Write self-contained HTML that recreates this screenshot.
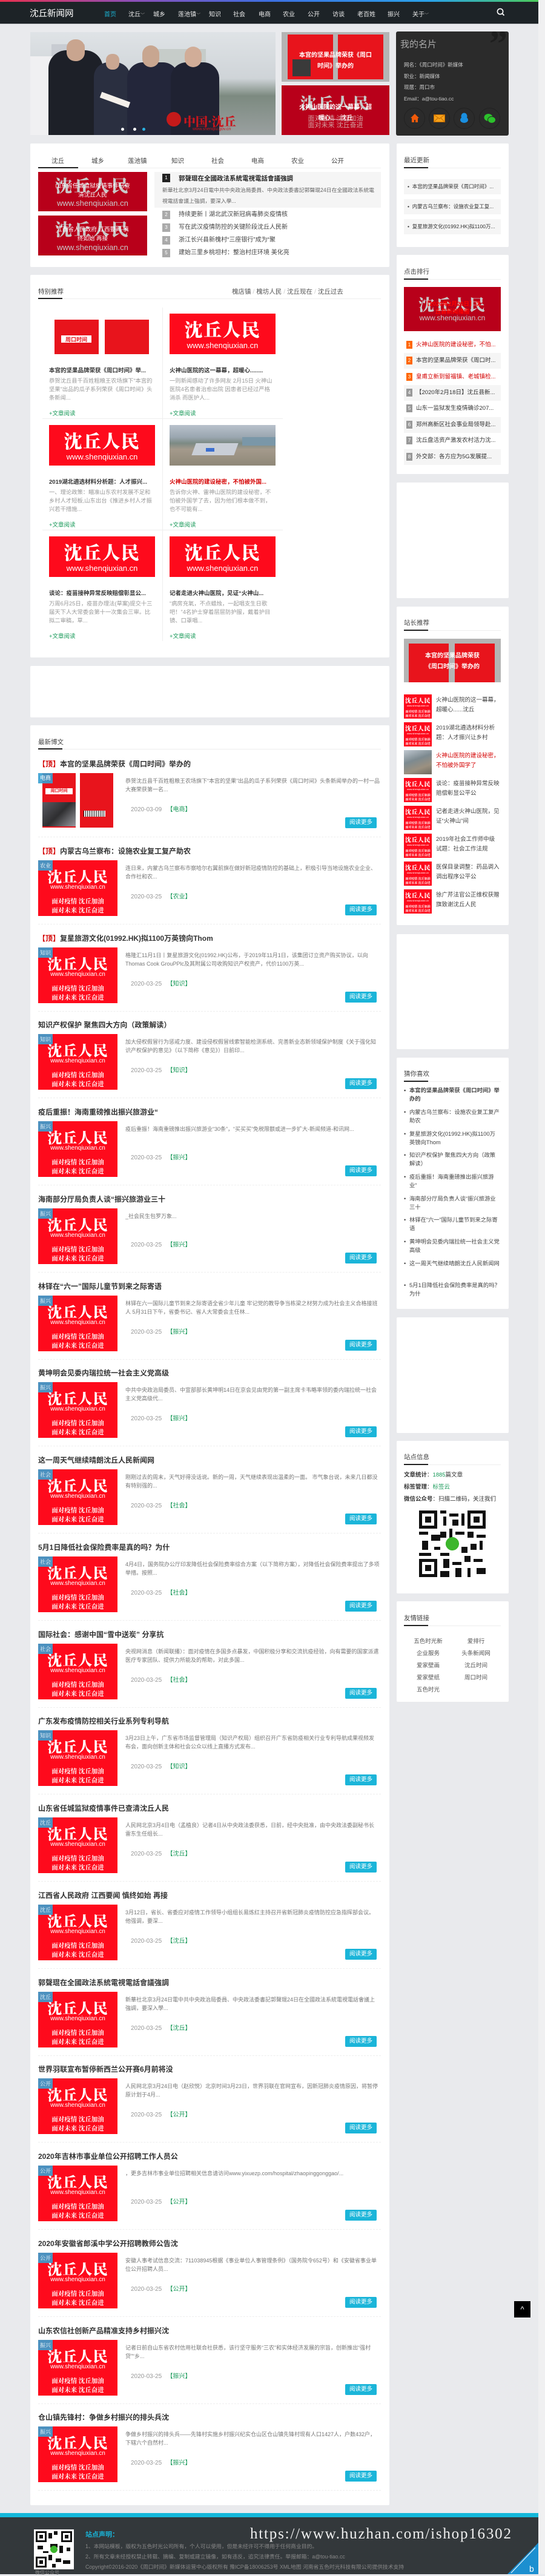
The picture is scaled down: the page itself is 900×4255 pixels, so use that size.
<!DOCTYPE html>
<html><head><meta charset="utf-8">
<style>
*{box-sizing:border-box;margin:0;padding:0}
body{width:900px;height:4252px;position:relative;overflow:hidden;background:#e9eaed;font-family:"Liberation Sans","Noto Sans CJK SC",sans-serif;color:#333}
.abs{position:absolute}
.box{position:absolute;background:#fff;border-radius:2px}
.bt{position:absolute;font-size:10.5px;color:#444;white-space:nowrap}
.ul{position:absolute;height:2px;background:#222}
.gl{position:absolute;height:1px;background:#eee}
.poster{position:absolute;background:#fe0a1c;overflow:hidden;color:#fff;font-family:"Noto Serif CJK SC","Noto Sans CJK SC",serif}
.poster .a{position:absolute;left:0;right:0;text-align:center;font-weight:900;line-height:1;letter-spacing:.05em}
.poster .b{position:absolute;left:0;right:0;text-align:center;font-family:"Liberation Sans",sans-serif;line-height:1}
.poster .c{position:absolute;left:0;right:0;text-align:center;line-height:1.45;font-weight:700;white-space:nowrap}
.tag{position:absolute;left:0;top:0;background:rgba(56,160,210,.9);color:#fff;font-size:9px;padding:2px 3px;line-height:13px}
.art{position:absolute;left:63px;width:566px;height:144px}
.art .t{position:absolute;left:0;top:0;height:24px;line-height:24px;font-size:12px;font-weight:700;color:#333;white-space:nowrap}
.art .t i{font-style:normal;color:#d40000}
.art .d{position:absolute;left:144px;top:33px;width:420px;height:28px;overflow:hidden;font-size:9px;line-height:14px;color:#777}
.art .dt{position:absolute;left:153px;top:78px;font-size:10px;color:#999}
.art .dt b{font-weight:400;color:#1a9a5a}
.art .btn{position:absolute;right:7px;top:100px;width:52px;height:18px;background:#1bb5d9;color:#fff;font-size:9.5px;line-height:18px;text-align:center;border-radius:2px}
.art .dv{position:absolute;left:0;right:0;top:132px;border-top:1px dashed #eee}
.sl{position:absolute;left:667px;width:160px;font-size:8.5px;color:#333;white-space:nowrap;overflow:hidden}
.rk{position:absolute;left:667px;width:160px;height:26px;line-height:26px;font-size:9.5px;white-space:nowrap;overflow:hidden;color:#333}
.rk .n{display:inline-block;width:10px;height:13px;line-height:13px;background:#999;color:#fff;font-size:8px;text-align:center;margin:0 6px 0 4px;vertical-align:middle}
.th{position:absolute;left:667px;width:160px;height:40px}
.th .tx{position:absolute;left:53px;top:2px;width:106px;font-size:9.5px;line-height:16px;color:#444;height:36px;overflow:hidden}
.gc{position:absolute;width:175px}
.gc .gt{position:absolute;top:86px;left:0;font-size:9.5px;font-weight:700;color:#333;white-space:nowrap}
.gc .gd{position:absolute;top:104px;left:0;width:175px;font-size:9.3px;line-height:14px;color:#999;height:42px;overflow:hidden}
.gc .gr{position:absolute;top:157px;left:0;font-size:9.5px;color:#1a9a5a}
.gy{position:absolute;left:667px;width:160px;font-size:9.3px;line-height:14px;color:#444}
.gy:before{content:"•";position:absolute;left:0;top:0}
.gy span{display:block;margin-left:9px}
</style></head><body>

<!-- top gradient -->
<div class="abs" style="left:0;top:0;width:889px;height:3px;background:linear-gradient(90deg,#e8304f,#8a4fb8 25%,#3d6fe0 50%,#2aa2e8 80%,#4ccb5a)"></div>
<div class="abs" style="left:889px;top:0;width:11px;height:4252px;background:#f0f0f1"></div>
<!-- header -->
<div class="abs" style="left:0;top:3px;width:889px;height:36px;background:#1d2327"></div>
<div class="abs" style="left:0;top:39px;width:889px;height:1px;background:#b9bcc0"></div>
<div class="abs" style="left:49px;top:11px;font-size:14.5px;color:#fff;white-space:nowrap">沈丘新闻网</div>
<div class="abs" style="top:15px;left:0;font-size:10px;color:#e8e8e8;white-space:nowrap">
<span class="abs" style="left:172px;color:#1ab0d0">首页</span>
<span class="abs" style="left:212px">沈丘<small style="font-size:7px;color:#999">﹀</small></span>
<span class="abs" style="left:253px">城乡</span>
<span class="abs" style="left:294px">莲池镇<small style="font-size:7px;color:#999">﹀</small></span>
<span class="abs" style="left:345px">知识</span>
<span class="abs" style="left:385px">社会</span>
<span class="abs" style="left:427px">电商</span>
<span class="abs" style="left:467px">农业</span>
<span class="abs" style="left:508px">公开</span>
<span class="abs" style="left:549px">访谈</span>
<span class="abs" style="left:590px">老百姓</span>
<span class="abs" style="left:640px">振兴</span>
<span class="abs" style="left:681px">关于<small style="font-size:7px;color:#999">﹀</small></span>
</div>
<svg class="abs" style="left:820px;top:13px" width="14" height="14" viewBox="0 0 14 14"><circle cx="6" cy="6" r="4.6" fill="none" stroke="#fff" stroke-width="1.6"/><path d="M9.3 9.3L12.5 12.5" stroke="#fff" stroke-width="1.8"/></svg>

<!-- slider -->
<div class="abs" style="left:50px;top:53px;width:405px;height:170px;overflow:hidden;background:linear-gradient(180deg,#dfe3e6 0%,#cfd4d8 45%,#7c8a80 62%,#9aa0a0 100%)">
 <div class="abs" style="left:35px;top:20px;width:55px;height:40px;background:#c8ccd2"></div>
 <div class="abs" style="left:210px;top:28px;width:80px;height:30px;background:#c6ccc9"></div>
 <div class="abs" style="left:0;top:40px;width:40px;height:130px;background:#f0f0f2"></div>
 <div class="abs" style="left:30px;top:30px;width:90px;height:150px;background:#1d2028;border-radius:30px 30px 0 0"></div>
 <div class="abs" style="left:60px;top:12px;width:30px;height:36px;background:#c9a58f;border-radius:14px"></div>
 <div class="abs" style="left:105px;top:50px;width:60px;height:130px;background:#2a2f40;border-radius:24px 24px 0 0"></div>
 <div class="abs" style="left:125px;top:36px;width:22px;height:26px;background:#caa792;border-radius:10px"></div>
 <div class="abs" style="left:160px;top:50px;width:85px;height:130px;background:#23263a;border-radius:26px 26px 0 0"></div>
 <div class="abs" style="left:185px;top:22px;width:28px;height:36px;background:#c8a690;border-radius:14px"></div>
 <div class="abs" style="left:232px;top:50px;width:80px;height:130px;background:#1f2232;border-radius:26px 26px 0 0"></div>
 <div class="abs" style="left:255px;top:24px;width:28px;height:34px;background:#d1ad98;border-radius:14px"></div>
 <div class="abs" style="left:115px;top:107px;width:50px;height:10px;background:#f4f0ea;transform:rotate(20deg)"></div>
 <div class="abs" style="left:225px;top:132px;width:24px;height:24px;border-radius:50%;background:#c51a1a"></div>
 <div class="abs" style="left:253px;top:132px;font-size:20px;font-weight:900;color:#c8161d;font-family:'Noto Serif CJK SC',serif;white-space:nowrap">中国·沈丘</div>
 <div class="abs" style="left:268px;top:157px;font-size:7px;color:#c8161d;white-space:nowrap">www.shenqiu.gov.cn</div>
 <div class="abs" style="left:170px;top:158px;width:5px;height:5px;border-radius:50%;background:#fff"></div>
 <div class="abs" style="left:185px;top:158px;width:5px;height:5px;border-radius:50%;background:#29b0e0"></div>
 <div class="abs" style="left:150px;top:158px;width:5px;height:5px;border-radius:50%;background:#fff"></div>
</div>
<!-- small img1 -->
<div class="abs" style="left:465px;top:53px;width:178px;height:82px;background:#b4b4b4;overflow:hidden">
 <div class="abs" style="left:10px;top:4px;width:75px;height:74px;background:#e8141c"></div>
 <div class="abs" style="left:93px;top:4px;width:75px;height:74px;background:#e8141c"></div>
 <div class="abs" style="left:18px;top:45px;width:30px;height:28px;background:#3a3a3a"></div>
 <div class="abs" style="left:0;right:0;top:30px;text-align:center;font-size:10px;line-height:18px;color:#fff;font-weight:700">本宫的坚果品牌荣获《周口<br>时间》举办的</div>
</div>
<!-- small img2 -->
<div class="abs" style="left:465px;top:141px;width:178px;height:82px;background:#b8001a;overflow:hidden">
 <div class="abs" style="left:0;right:0;top:10px;text-align:center;font-size:26px;color:#c9c9c9;font-weight:900;font-family:'Noto Serif CJK SC',serif;letter-spacing:3px">沈丘人民</div>
 <div class="abs" style="left:0;right:0;top:50px;text-align:center;font-size:11px;color:#d3a0a0;line-height:11px">面对疫情 沈丘加油<br>面对未来 沈丘奋进</div>
 <div class="abs" style="left:0;right:0;top:28px;text-align:center;font-size:10px;line-height:18px;color:#fff;font-weight:700">火神山医院的这一幕幕，超<br>暖心......沈丘</div>
</div>
<!-- card -->
<div class="abs" style="left:654px;top:52px;width:186px;height:172px;background:#2b2b2b;border-radius:3px;overflow:hidden">
 <div class="abs" style="right:2px;top:-14px;font-size:60px;color:#1e1e1e;font-family:'Liberation Serif',serif;font-weight:700">”</div>
 <div class="abs" style="left:7px;top:10px;font-size:15px;color:#a9a9a9">我的名片</div>
 <div class="abs" style="left:13px;top:46px;font-size:8.5px;color:#ccc;line-height:18.5px;white-space:nowrap">网名：《周口时间》新媒体<br>职业：新闻媒体<br>现居：周口市<br>Email：a@tou-tiao.cc</div>
 <div class="abs" style="left:13px;top:126px;width:35px;height:35px;border-radius:50%;border:1px solid #222"></div>
 <div class="abs" style="left:54px;top:126px;width:35px;height:35px;border-radius:50%;border:1px solid #222"></div>
 <div class="abs" style="left:95px;top:126px;width:35px;height:35px;border-radius:50%;border:1px solid #222"></div>
 <div class="abs" style="left:137px;top:126px;width:35px;height:35px;border-radius:50%;border:1px solid #222"></div>
 <svg class="abs" style="left:23px;top:135px" width="16" height="16" viewBox="0 0 16 16"><path d="M8 1L1 8h2v7h4v-4h2v4h4V8h2z" fill="#f05a0a"/></svg>
 <svg class="abs" style="left:62px;top:137px" width="19" height="13" viewBox="0 0 19 13"><rect x=".5" y=".5" width="18" height="12" fill="#f7a21a" stroke="#c46b00"/><path d="M.5 .5L9.5 7 18.5 .5M.5 12.5L7 6M18.5 12.5L12 6" stroke="#c46b00" fill="none"/></svg>
 <svg class="abs" style="left:105px;top:134px" width="15" height="18" viewBox="0 0 15 18"><ellipse cx="7.5" cy="6" rx="5" ry="5.5" fill="#1a8fe0"/><ellipse cx="7.5" cy="12" rx="6.5" ry="5" fill="#1a8fe0"/></svg>
 <svg class="abs" style="left:145px;top:135px" width="20" height="17" viewBox="0 0 20 17"><ellipse cx="7.5" cy="7" rx="7" ry="6" fill="#2cc12c"/><ellipse cx="13" cy="11" rx="6.5" ry="5.5" fill="#2cc12c" stroke="#2b2b2b" stroke-width="1"/></svg>
</div>

<!-- BOX 1 tabs -->
<div class="box" style="left:50px;top:237px;width:593px;height:204px"></div>
<div class="abs" style="top:258px;left:0;font-size:10.5px;color:#444;white-space:nowrap">
<span class="abs" style="left:85px">沈丘</span><span class="abs" style="left:151px">城乡</span><span class="abs" style="left:211px">莲池镇</span><span class="abs" style="left:283px">知识</span><span class="abs" style="left:349px">社会</span><span class="abs" style="left:415px">电商</span><span class="abs" style="left:481px">农业</span><span class="abs" style="left:547px">公开</span></div>
<div class="gl" style="left:63px;top:277px;width:566px"></div>
<div class="ul" style="left:63px;top:276px;width:66px"></div>
<div class="abs" style="left:63px;top:284px;width:180px;height:65px;background:#b8001a;overflow:hidden">
 <div class="abs" style="left:0;right:0;top:2px;text-align:center;font-size:28px;color:#c9c9c9;font-weight:900;font-family:'Noto Serif CJK SC',serif;letter-spacing:3px">沈丘人民</div>
 <div class="abs" style="left:0;right:0;top:44px;text-align:center;font-size:13px;color:#c9c9c9">www.shenqiuxian.cn</div>
 <div class="abs" style="left:0;right:0;top:16px;text-align:center;font-size:9.5px;line-height:15px;color:#fff">山东省任城监狱疫情事件已查<br>清沈丘人民</div>
</div>
<div class="abs" style="left:63px;top:356px;width:180px;height:66px;background:#b8001a;overflow:hidden">
 <div class="abs" style="left:0;right:0;top:2px;text-align:center;font-size:28px;color:#c9c9c9;font-weight:900;font-family:'Noto Serif CJK SC',serif;letter-spacing:3px">沈丘人民</div>
 <div class="abs" style="left:0;right:0;top:45px;text-align:center;font-size:13px;color:#c9c9c9">www.shenqiuxian.cn</div>
 <div class="abs" style="left:0;right:0;top:16px;text-align:center;font-size:9.5px;line-height:15px;color:#fff">江西省人民政府 江西要闻 慎<br>终如始 再接</div>
</div>
<div class="abs" style="left:255px;top:284px;width:374px;height:59px;background:#f5f5f5"></div>
<div class="abs" style="left:268px;top:287px;width:13px;height:14px;background:#222;color:#fff;font-size:8px;text-align:center;line-height:14px">1</div>
<div class="abs" style="left:295px;top:287px;font-size:10.5px;font-weight:700;color:#222;white-space:nowrap">郭聲琨在全國政法系統電視電話會議強調</div>
<div class="abs" style="left:268px;top:305px;width:355px;font-size:8.8px;line-height:18px;color:#666">新華社北京3月24日電中共中央政治局委員、中央政法委書記郭聲琨24日在全國政法系統電視電話會議上強調，要深入學...</div>
<div class="abs" style="left:268px;top:348px;font-size:10px;color:#444;line-height:14px">
<div style="position:absolute;top:0;width:13px;height:14px;background:#aaa;color:#fff;font-size:8px;text-align:center">2</div><div style="position:absolute;left:27px;top:0;white-space:nowrap">持续更新丨湖北武汉新冠病毒肺炎疫情核</div>
<div style="position:absolute;top:21px;width:13px;height:14px;background:#aaa;color:#fff;font-size:8px;text-align:center">3</div><div style="position:absolute;left:27px;top:21px;white-space:nowrap">写在武汉疫情防控的关键阶段沈丘人民新</div>
<div style="position:absolute;top:42px;width:13px;height:14px;background:#aaa;color:#fff;font-size:8px;text-align:center">4</div><div style="position:absolute;left:27px;top:42px;white-space:nowrap">浙江长兴县新槐村“三座银行”成为“聚</div>
<div style="position:absolute;top:63px;width:13px;height:14px;background:#aaa;color:#fff;font-size:8px;text-align:center">5</div><div style="position:absolute;left:27px;top:63px;white-space:nowrap">建始三里乡桃坦村：整治村庄环境 美化亮</div>
</div>

<!-- BOX 2 特别推荐 -->
<div class="box" style="left:50px;top:454px;width:593px;height:632px"></div>
<div class="bt" style="left:63px;top:474px">特别推荐</div>
<div class="abs" style="left:383px;top:474px;font-size:10.5px;color:#555;white-space:nowrap">槐店镇 <span style="color:#ccc">/</span> 槐坊人民 <span style="color:#ccc">/</span> 沈丘现在 <span style="color:#ccc">/</span> 沈丘过去</div>
<div class="gl" style="left:63px;top:493px;width:566px"></div>
<div class="ul" style="left:63px;top:492px;width:40px"></div>
<div class="abs" style="left:268px;top:508px;width:1px;height:551px;background:#eee"></div>
<div class="abs" style="left:70px;top:691px;width:397px;height:1px;background:#eee"></div>
<div class="abs" style="left:70px;top:875px;width:397px;height:1px;background:#eee"></div>

<div class="gc" style="left:81px;top:518px">
 <div class="abs" style="left:0;top:0;width:175px;height:67px;background:#fff">
  <div class="abs" style="left:9px;top:10px;width:73px;height:57px;background:#e8141c"></div>
  <div class="abs" style="left:92px;top:10px;width:73px;height:57px;background:#e8141c"></div>
  <div class="abs" style="left:20px;top:36px;width:50px;height:12px;background:#fff;color:#e8141c;font-size:9px;font-weight:700;text-align:center">周口时间</div>
 </div>
 <div class="gt">本宫的坚果品牌荣获《周口时间》举...</div>
 <div class="gd">恭贺沈丘县千百姓粗粮王农场旗下“本宫的坚果”出品的瓜子系列荣获《周口时间》头条新闻...</div>
 <div class="gr">+文章阅读</div>
</div>
<div class="gc" style="left:280px;top:518px">
 <div class="poster" style="left:0;top:0;width:175px;height:67px"><div class="a" style="top:10px;font-size:30px">沈丘人民</div><div class="b" style="top:46px;font-size:13px">www.shenqiuxian.cn</div></div>
 <div class="gt">火神山医院的这一幕幕，超暖心........</div>
 <div class="gd">一则新闻感动了许多网友 2月15日 火神山医院4名患者治愈出院 因患者已经过严格消杀 而医护人...</div>
 <div class="gr">+文章阅读</div>
</div>
<div class="gc" style="left:81px;top:702px">
 <div class="poster" style="left:0;top:0;width:175px;height:67px"><div class="a" style="top:10px;font-size:30px">沈丘人民</div><div class="b" style="top:46px;font-size:13px">www.shenqiuxian.cn</div></div>
 <div class="gt">2019湖北遴选材料分析题：人才振兴...</div>
 <div class="gd">一、理论政策：瞄准山东农村发展不足和乡村人才短板,山东出台《推进乡村人才振兴若干措施...</div>
 <div class="gr">+文章阅读</div>
</div>
<div class="gc" style="left:280px;top:702px">
 <div class="abs" style="left:0;top:0;width:175px;height:67px;background:linear-gradient(180deg,#b9c2cc 0%,#9aa6b0 30%,#7c8a84 45%,#a49a8c 60%,#8f8878 100%);overflow:hidden">
  <div class="abs" style="left:40px;top:30px;width:70px;height:20px;background:#c9ced6;transform:skewX(-20deg)"></div>
  <div class="abs" style="left:120px;top:20px;width:60px;height:14px;background:#7a97a8"></div>
  <div class="abs" style="left:60px;top:38px;width:14px;height:6px;background:#3b6fd0"></div>
 </div>
 <div class="gt" style="color:#d40000">火神山医院的建设秘密，不怕被外国...</div>
 <div class="gd">告诉你火神、雷神山医院的建设秘密，不怕被外国学了去，因为他们根本做不到，也不可能有...</div>
 <div class="gr">+文章阅读</div>
</div>
<div class="gc" style="left:81px;top:886px">
 <div class="poster" style="left:0;top:0;width:175px;height:67px"><div class="a" style="top:10px;font-size:30px">沈丘人民</div><div class="b" style="top:46px;font-size:13px">www.shenqiuxian.cn</div></div>
 <div class="gt">谈论：疫苗接种异常反映赔偿彰显公...</div>
 <div class="gd">万周6月25日，疫苗办理法(草案)提交十三届天下人大常委会第十一次集会三审。比拟二审稿，草...</div>
 <div class="gr">+文章阅读</div>
</div>
<div class="gc" style="left:280px;top:886px">
 <div class="poster" style="left:0;top:0;width:175px;height:67px"><div class="a" style="top:10px;font-size:30px">沈丘人民</div><div class="b" style="top:46px;font-size:13px">www.shenqiuxian.cn</div></div>
 <div class="gt">记者走进火神山医院，见证“火神山...</div>
 <div class="gd">“病房充氧，不点蜡烛，一起唱支生日歌吧！”4名护士穿着层层防护服，戴着护目镜、口罩唱...</div>
 <div class="gr">+文章阅读</div>
</div>

<!-- empty main box -->
<div class="box" style="left:50px;top:1100px;width:593px;height:85px"></div>

<!-- 最新博文 -->
<div class="box" style="left:50px;top:1198px;width:593px;height:2940px"></div>
<div class="bt" style="left:63px;top:1218px">最新博文</div>
<div class="gl" style="left:63px;top:1237px;width:566px"></div>
<div class="ul" style="left:63px;top:1236px;width:40px"></div>

<div class="art" style="top:1250px"><div class="t"><i>【顶】</i>本宫的坚果品牌荣获《周口时间》举办的</div>
 <div class="abs" style="left:0;top:27px;width:131px;height:92px">
  <div class="abs" style="left:7px;top:0;width:55px;height:90px;background:#e8141c"></div>
  <div class="abs" style="left:69px;top:0;width:55px;height:90px;background:#e8141c"></div>
  <div class="abs" style="left:12px;top:25px;width:45px;height:10px;background:#fff;color:#e8141c;font-size:7px;font-weight:700;text-align:center;line-height:10px">周口时间</div>
  <div class="abs" style="left:7px;top:48px;width:55px;height:40px;background:linear-gradient(135deg,#5a5a62,#2e2e30,#9a9aa0)"></div>
  <div class="abs" style="left:75px;top:62px;width:36px;height:10px;background:repeating-linear-gradient(90deg,#111 0 1px,#fff 1px 3px)"></div>
  <div class="tag">电商</div></div>
 <div class="d">恭贺沈丘县千百姓粗粮王农场旗下“本宫的坚果”出品的瓜子系列荣获《周口时间》头条新闻举办的一村一品大赛荣获第一名...</div>
 <div class="dt">2020-03-09 &nbsp; <b>【电商】</b></div><div class="btn">阅读更多</div><div class="dv"></div></div>

<div class="art" style="top:1394px"><div class="t"><i>【顶】</i>内蒙古乌兰察布：设施农业复工复产助农</div>
 <div class="poster" style="left:0;top:27px;width:131px;height:92px"><div class="a" style="top:14px;font-size:24px">沈丘人民</div><div class="b" style="top:40px;font-size:10px">www.shenqiuxian.cn</div><div class="c" style="top:60px;font-size:10.5px">面对疫情 沈丘加油<br>面对未来 沈丘奋进</div><div class="tag">农业</div></div>
 <div class="d">连日来，内蒙古乌兰察布市察哈尔右翼前旗在做好新冠疫情防控的基础上，积极引导当地设施农业企业、合作社和农...</div>
 <div class="dt">2020-03-25 &nbsp; <b>【农业】</b></div><div class="btn">阅读更多</div><div class="dv"></div></div>

<div class="art" style="top:1538px"><div class="t"><i>【顶】</i>复星旅游文化(01992.HK)拟1100万英镑向Thom</div>
 <div class="poster" style="left:0;top:27px;width:131px;height:92px"><div class="a" style="top:14px;font-size:24px">沈丘人民</div><div class="b" style="top:40px;font-size:10px">www.shenqiuxian.cn</div><div class="c" style="top:60px;font-size:10.5px">面对疫情 沈丘加油<br>面对未来 沈丘奋进</div><div class="tag">知识</div></div>
 <div class="d">格隆汇11月1日丨复星旅游文化(01992.HK)公布，于2019年11月1日，该集团订立资产购买协议，以向Thomas Cook GrouPPlc及其附属公司收购知识产权资产，代价1100万英...</div>
 <div class="dt">2020-03-25 &nbsp; <b>【知识】</b></div><div class="btn">阅读更多</div><div class="dv"></div></div>

<div class="art" style="top:1681px"><div class="t">知识产权保护 聚焦四大方向（政策解读）</div>
 <div class="poster" style="left:0;top:27px;width:131px;height:92px"><div class="a" style="top:14px;font-size:24px">沈丘人民</div><div class="b" style="top:40px;font-size:10px">www.shenqiuxian.cn</div><div class="c" style="top:60px;font-size:10.5px">面对疫情 沈丘加油<br>面对未来 沈丘奋进</div><div class="tag">知识</div></div>
 <div class="d">加大侵权假冒行为惩戒力度、建设侵权假冒线索智能检测系统、完善新业态新领域保护制度《关于强化知识产权保护的意见》（以下简称《意见》）日前印...</div>
 <div class="dt">2020-03-25 &nbsp; <b>【知识】</b></div><div class="btn">阅读更多</div><div class="dv"></div></div>

<div class="art" style="top:1825px"><div class="t">疫后重振！海南重磅推出振兴旅游业“</div>
 <div class="poster" style="left:0;top:27px;width:131px;height:92px"><div class="a" style="top:14px;font-size:24px">沈丘人民</div><div class="b" style="top:40px;font-size:10px">www.shenqiuxian.cn</div><div class="c" style="top:60px;font-size:10.5px">面对疫情 沈丘加油<br>面对未来 沈丘奋进</div><div class="tag">振兴</div></div>
 <div class="d">疫后重振！海南重磅推出振兴旅游业“30条”，“买买买”免税限额或进一步扩大-新闻频道-和讯网...</div>
 <div class="dt">2020-03-25 &nbsp; <b>【振兴】</b></div><div class="btn">阅读更多</div><div class="dv"></div></div>

<div class="art" style="top:1969px"><div class="t">海南部分厅局负责人谈“振兴旅游业三十</div>
 <div class="poster" style="left:0;top:27px;width:131px;height:92px"><div class="a" style="top:14px;font-size:24px">沈丘人民</div><div class="b" style="top:40px;font-size:10px">www.shenqiuxian.cn</div><div class="c" style="top:60px;font-size:10.5px">面对疫情 沈丘加油<br>面对未来 沈丘奋进</div><div class="tag">振兴</div></div>
 <div class="d">_社会民生包罗万象...</div>
 <div class="dt">2020-03-25 &nbsp; <b>【振兴】</b></div><div class="btn">阅读更多</div><div class="dv"></div></div>

<div class="art" style="top:2113px"><div class="t">林铎在“六一”国际儿童节到来之际寄语</div>
 <div class="poster" style="left:0;top:27px;width:131px;height:92px"><div class="a" style="top:14px;font-size:24px">沈丘人民</div><div class="b" style="top:40px;font-size:10px">www.shenqiuxian.cn</div><div class="c" style="top:60px;font-size:10.5px">面对疫情 沈丘加油<br>面对未来 沈丘奋进</div><div class="tag">振兴</div></div>
 <div class="d">林铎在六一国际儿童节到来之际寄语全省少年儿童 牢记党的教导争当栋梁之材努力成为社会主义合格接班人 5月31日下午，省委书记、省人大常委会主任林...</div>
 <div class="dt">2020-03-25 &nbsp; <b>【振兴】</b></div><div class="btn">阅读更多</div><div class="dv"></div></div>

<div class="art" style="top:2256px"><div class="t">黄坤明会见委内瑞拉统一社会主义党高级</div>
 <div class="poster" style="left:0;top:27px;width:131px;height:92px"><div class="a" style="top:14px;font-size:24px">沈丘人民</div><div class="b" style="top:40px;font-size:10px">www.shenqiuxian.cn</div><div class="c" style="top:60px;font-size:10.5px">面对疫情 沈丘加油<br>面对未来 沈丘奋进</div><div class="tag">振兴</div></div>
 <div class="d">中共中央政治局委员、中宣部部长黄坤明14日在京会见由党的第一副主席卡韦略率领的委内瑞拉统一社会主义党高级代...</div>
 <div class="dt">2020-03-25 &nbsp; <b>【振兴】</b></div><div class="btn">阅读更多</div><div class="dv"></div></div>

<div class="art" style="top:2400px"><div class="t">这一周天气继续晴朗沈丘人民新闻网</div>
 <div class="poster" style="left:0;top:27px;width:131px;height:92px"><div class="a" style="top:14px;font-size:24px">沈丘人民</div><div class="b" style="top:40px;font-size:10px">www.shenqiuxian.cn</div><div class="c" style="top:60px;font-size:10.5px">面对疫情 沈丘加油<br>面对未来 沈丘奋进</div><div class="tag">社会</div></div>
 <div class="d">刚刚过去的周末，天气好得没话说。新的一周，天气继续表现出温柔的一面。 市气象台说，未来几日都没有特别强的...</div>
 <div class="dt">2020-03-25 &nbsp; <b>【社会】</b></div><div class="btn">阅读更多</div><div class="dv"></div></div>

<div class="art" style="top:2544px"><div class="t">5月1日降低社会保险费率是真的吗？为什</div>
 <div class="poster" style="left:0;top:27px;width:131px;height:92px"><div class="a" style="top:14px;font-size:24px">沈丘人民</div><div class="b" style="top:40px;font-size:10px">www.shenqiuxian.cn</div><div class="c" style="top:60px;font-size:10.5px">面对疫情 沈丘加油<br>面对未来 沈丘奋进</div><div class="tag">社会</div></div>
 <div class="d">4月4日，国务院办公厅印发降低社会保险费率综合方案（以下简称方案），对降低社会保险费率提出了多项举措。按照...</div>
 <div class="dt">2020-03-25 &nbsp; <b>【社会】</b></div><div class="btn">阅读更多</div><div class="dv"></div></div>

<div class="art" style="top:2688px"><div class="t">国际社会：感谢中国“雪中送炭” 分享抗</div>
 <div class="poster" style="left:0;top:27px;width:131px;height:92px"><div class="a" style="top:14px;font-size:24px">沈丘人民</div><div class="b" style="top:40px;font-size:10px">www.shenqiuxian.cn</div><div class="c" style="top:60px;font-size:10.5px">面对疫情 沈丘加油<br>面对未来 沈丘奋进</div><div class="tag">社会</div></div>
 <div class="d">央视网消息（新闻联播）：面对疫情在多国多点暴发，中国积极分享和交流抗疫经验，向有需要的国家派遣医疗专家团队、提供力所能及的帮助，对此多国...</div>
 <div class="dt">2020-03-25 &nbsp; <b>【社会】</b></div><div class="btn">阅读更多</div><div class="dv"></div></div>

<div class="art" style="top:2831px"><div class="t">广东发布疫情防控相关行业系列专利导航</div>
 <div class="poster" style="left:0;top:27px;width:131px;height:92px"><div class="a" style="top:14px;font-size:24px">沈丘人民</div><div class="b" style="top:40px;font-size:10px">www.shenqiuxian.cn</div><div class="c" style="top:60px;font-size:10.5px">面对疫情 沈丘加油<br>面对未来 沈丘奋进</div><div class="tag">知识</div></div>
 <div class="d">3月23日上午，广东省市场监督管理局（知识产权局）组织召开广东省防疫相关行业专利导航成果视频发布会，面向创新主体和社会公众以线上直播方式发布...</div>
 <div class="dt">2020-03-25 &nbsp; <b>【知识】</b></div><div class="btn">阅读更多</div><div class="dv"></div></div>

<div class="art" style="top:2975px"><div class="t">山东省任城监狱疫情事件已查清沈丘人民</div>
 <div class="poster" style="left:0;top:27px;width:131px;height:92px"><div class="a" style="top:14px;font-size:24px">沈丘人民</div><div class="b" style="top:40px;font-size:10px">www.shenqiuxian.cn</div><div class="c" style="top:60px;font-size:10.5px">面对疫情 沈丘加油<br>面对未来 沈丘奋进</div><div class="tag">沈丘</div></div>
 <div class="d">人民网北京3月4日电（孟植良）记者4日从中央政法委获悉，日前，经中央批准，由中央政法委副秘书长雷东生任组长...</div>
 <div class="dt">2020-03-25 &nbsp; <b>【沈丘】</b></div><div class="btn">阅读更多</div><div class="dv"></div></div>

<div class="art" style="top:3119px"><div class="t">江西省人民政府 江西要闻 慎终如始 再接</div>
 <div class="poster" style="left:0;top:27px;width:131px;height:92px"><div class="a" style="top:14px;font-size:24px">沈丘人民</div><div class="b" style="top:40px;font-size:10px">www.shenqiuxian.cn</div><div class="c" style="top:60px;font-size:10.5px">面对疫情 沈丘加油<br>面对未来 沈丘奋进</div><div class="tag">沈丘</div></div>
 <div class="d">3月12日，省长、省委应对疫情工作领导小组组长易炼红主持召开省新冠肺炎疫情防控应急指挥部会议。他强调，要深...</div>
 <div class="dt">2020-03-25 &nbsp; <b>【沈丘】</b></div><div class="btn">阅读更多</div><div class="dv"></div></div>

<div class="art" style="top:3263px"><div class="t">郭聲琨在全國政法系統電視電話會議強調</div>
 <div class="poster" style="left:0;top:27px;width:131px;height:92px"><div class="a" style="top:14px;font-size:24px">沈丘人民</div><div class="b" style="top:40px;font-size:10px">www.shenqiuxian.cn</div><div class="c" style="top:60px;font-size:10.5px">面对疫情 沈丘加油<br>面对未来 沈丘奋进</div><div class="tag">沈丘</div></div>
 <div class="d">新華社北京3月24日電中共中央政治局委員、中央政法委書記郭聲琨24日在全國政法系統電視電話會議上強調，要深入學...</div>
 <div class="dt">2020-03-25 &nbsp; <b>【沈丘】</b></div><div class="btn">阅读更多</div><div class="dv"></div></div>

<div class="art" style="top:3406px"><div class="t">世界羽联宣布暂停新西兰公开赛6月前将没</div>
 <div class="poster" style="left:0;top:27px;width:131px;height:92px"><div class="a" style="top:14px;font-size:24px">沈丘人民</div><div class="b" style="top:40px;font-size:10px">www.shenqiuxian.cn</div><div class="c" style="top:60px;font-size:10.5px">面对疫情 沈丘加油<br>面对未来 沈丘奋进</div><div class="tag">公开</div></div>
 <div class="d">人民网北京3月24日电（赵欣悦）北京时间3月23日，世界羽联在官网宣布，因新冠肺炎疫情原因，将暂停原计划于4月...</div>
 <div class="dt">2020-03-25 &nbsp; <b>【公开】</b></div><div class="btn">阅读更多</div><div class="dv"></div></div>

<div class="art" style="top:3550px"><div class="t">2020年吉林市事业单位公开招聘工作人员公</div>
 <div class="poster" style="left:0;top:27px;width:131px;height:92px"><div class="a" style="top:14px;font-size:24px">沈丘人民</div><div class="b" style="top:40px;font-size:10px">www.shenqiuxian.cn</div><div class="c" style="top:60px;font-size:10.5px">面对疫情 沈丘加油<br>面对未来 沈丘奋进</div><div class="tag">公开</div></div>
 <div class="d">，更多吉林市事业单位招聘相关信息请访问www.yixuezp.com/hospital/zhaopinggonggao/...</div>
 <div class="dt">2020-03-25 &nbsp; <b>【公开】</b></div><div class="btn">阅读更多</div><div class="dv"></div></div>

<div class="art" style="top:3694px"><div class="t">2020年安徽省郎溪中学公开招聘教师公告沈</div>
 <div class="poster" style="left:0;top:27px;width:131px;height:92px"><div class="a" style="top:14px;font-size:24px">沈丘人民</div><div class="b" style="top:40px;font-size:10px">www.shenqiuxian.cn</div><div class="c" style="top:60px;font-size:10.5px">面对疫情 沈丘加油<br>面对未来 沈丘奋进</div><div class="tag">公开</div></div>
 <div class="d">安徽人事考试信息交流：711038945根据《事业单位人事管理条例》（国务院令652号）和《安徽省事业单位公开招聘人员...</div>
 <div class="dt">2020-03-25 &nbsp; <b>【公开】</b></div><div class="btn">阅读更多</div><div class="dv"></div></div>

<div class="art" style="top:3838px"><div class="t">山东农信社创新产品精准支持乡村振兴沈</div>
 <div class="poster" style="left:0;top:27px;width:131px;height:92px"><div class="a" style="top:14px;font-size:24px">沈丘人民</div><div class="b" style="top:40px;font-size:10px">www.shenqiuxian.cn</div><div class="c" style="top:60px;font-size:10.5px">面对疫情 沈丘加油<br>面对未来 沈丘奋进</div><div class="tag">振兴</div></div>
 <div class="d">记者日前自山东省农村信用社联合社获悉，该行坚守服务“三农”和实体经济发展的宗旨，创新推出“强村贷”“乡...</div>
 <div class="dt">2020-03-25 &nbsp; <b>【振兴】</b></div><div class="btn">阅读更多</div><div class="dv"></div></div>

<div class="art" style="top:3981px"><div class="t">仓山镇先锋村：争做乡村振兴的排头兵沈</div>
 <div class="poster" style="left:0;top:27px;width:131px;height:92px"><div class="a" style="top:14px;font-size:24px">沈丘人民</div><div class="b" style="top:40px;font-size:10px">www.shenqiuxian.cn</div><div class="c" style="top:60px;font-size:10.5px">面对疫情 沈丘加油<br>面对未来 沈丘奋进</div><div class="tag">振兴</div></div>
 <div class="d">争做乡村振兴的排头兵——先锋村实施乡村振兴纪实仓山区仓山镇先锋村现有人口1427人，户数432户，下辖六个自然村...</div>
 <div class="dt">2020-03-25 &nbsp; <b>【振兴】</b></div><div class="btn">阅读更多</div><div class="dv"></div></div>

<!-- SIDEBAR -->
<div class="box" style="left:655px;top:237px;width:185px;height:171px"></div>
<div class="bt" style="left:667px;top:257px">最近更新</div>
<div class="gl" style="left:667px;top:277px;width:160px"></div>
<div class="ul" style="left:667px;top:276px;width:40px"></div>
<div class="sl" style="top:296px;height:25px;line-height:25px;background:#f5f5f5;padding-left:6px">• &nbsp;本宫的坚果品牌荣获《周口时间》...</div>
<div class="sl" style="top:329px;height:25px;line-height:25px;background:#f5f5f5;padding-left:6px">• &nbsp;内蒙古乌兰察布：设施农业复工复...</div>
<div class="sl" style="top:362px;height:25px;line-height:25px;background:#f5f5f5;padding-left:6px">• &nbsp;复星旅游文化(01992.HK)拟1100万...</div>

<div class="box" style="left:655px;top:421px;width:185px;height:362px"></div>
<div class="bt" style="left:667px;top:441px">点击排行</div>
<div class="gl" style="left:667px;top:461px;width:160px"></div>
<div class="ul" style="left:667px;top:460px;width:40px"></div>
<div class="abs" style="left:667px;top:474px;width:160px;height:73px;background:#b8001a;overflow:hidden">
 <div class="abs" style="left:0;right:0;top:10px;text-align:center;font-size:26px;color:#c9c9c9;font-weight:900;font-family:'Noto Serif CJK SC',serif;letter-spacing:2px">沈丘人民</div>
 <div class="abs" style="left:0;right:0;top:44px;text-align:center;font-size:12px;color:#c9c9c9">www.shenqiuxian.cn</div>
 <div class="abs" style="left:0;right:0;top:22px;text-align:center;font-size:9.5px;line-height:13px;color:#f00;font-weight:700">【2020年2月20日】沈<br>丘县新闻播报</div>
</div>
<div class="rk" style="top:557px;color:#d40000"><span class="n" style="background:#f60">1</span>火神山医院的建设秘密，不怕...</div>
<div class="rk" style="top:583px;background:#f5f5f5"><span class="n" style="background:#f60">2</span>本宫的坚果品牌荣获《周口时...</div>
<div class="rk" style="top:610px;color:#d40000"><span class="n" style="background:#f60">3</span>皇甫立新到留福镇、老城镇检...</div>
<div class="rk" style="top:636px;background:#f5f5f5"><span class="n">4</span>【2020年2月18日】沈丘县新...</div>
<div class="rk" style="top:662px"><span class="n">5</span>山东一监狱发生疫情确诊207...</div>
<div class="rk" style="top:689px;background:#f5f5f5"><span class="n">6</span>郑州高新区社会事业局领导赴...</div>
<div class="rk" style="top:715px"><span class="n">7</span>沈丘盘活资产激发农村活力沈...</div>
<div class="rk" style="top:742px;background:#f5f5f5"><span class="n">8</span>外交部：各方应为5G发展提...</div>

<div class="box" style="left:655px;top:797px;width:185px;height:191px"></div>

<div class="box" style="left:655px;top:1002px;width:185px;height:526px"></div>
<div class="bt" style="left:667px;top:1021px">站长推荐</div>
<div class="gl" style="left:667px;top:1041px;width:160px"></div>
<div class="ul" style="left:667px;top:1040px;width:40px"></div>
<div class="abs" style="left:667px;top:1055px;width:160px;height:72px;background:#b4b4b4;overflow:hidden">
 <div class="abs" style="left:8px;top:8px;width:66px;height:64px;background:#e8141c"></div>
 <div class="abs" style="left:84px;top:8px;width:66px;height:64px;background:#e8141c"></div>
 <div class="abs" style="left:0;right:0;top:20px;text-align:center;font-size:10px;line-height:18px;color:#fff;font-weight:700">本宫的坚果品牌荣获<br>《周口时间》举办的</div>
</div>
<div class="th" style="top:1147px"><div class="poster" style="left:0;top:0;width:46px;height:40px"><div class="a" style="top:5px;font-size:10px">沈丘人民</div><div class="b" style="top:17px;font-size:4px">www.shenqiuxian.cn</div><div class="c" style="top:25px;font-size:5px">面对疫情 沈丘加油<br>面对未来 沈丘奋进</div></div><div class="tx">火神山医院的这一幕幕，超暖心......沈丘</div></div>
<div class="th" style="top:1193px"><div class="poster" style="left:0;top:0;width:46px;height:40px"><div class="a" style="top:5px;font-size:10px">沈丘人民</div><div class="b" style="top:17px;font-size:4px">www.shenqiuxian.cn</div><div class="c" style="top:25px;font-size:5px">面对疫情 沈丘加油<br>面对未来 沈丘奋进</div></div><div class="tx">2019湖北遴选材料分析题：人才振兴让乡村</div></div>
<div class="th" style="top:1239px"><div class="abs" style="left:0;top:0;width:46px;height:40px;background:linear-gradient(160deg,#c0c8d0,#7d8a90 40%,#9b9080 70%,#6d6a60)"></div><div class="tx" style="color:#d40000">火神山医院的建设秘密，不怕被外国学了</div></div>
<div class="th" style="top:1285px"><div class="poster" style="left:0;top:0;width:46px;height:40px"><div class="a" style="top:5px;font-size:10px">沈丘人民</div><div class="b" style="top:17px;font-size:4px">www.shenqiuxian.cn</div><div class="c" style="top:25px;font-size:5px">面对疫情 沈丘加油<br>面对未来 沈丘奋进</div></div><div class="tx">谈论：疫苗接种异常反映赔偿彰显公平公</div></div>
<div class="th" style="top:1331px"><div class="poster" style="left:0;top:0;width:46px;height:40px"><div class="a" style="top:5px;font-size:10px">沈丘人民</div><div class="b" style="top:17px;font-size:4px">www.shenqiuxian.cn</div><div class="c" style="top:25px;font-size:5px">面对疫情 沈丘加油<br>面对未来 沈丘奋进</div></div><div class="tx">记者走进火神山医院，见证“火神山”间</div></div>
<div class="th" style="top:1377px"><div class="poster" style="left:0;top:0;width:46px;height:40px"><div class="a" style="top:5px;font-size:10px">沈丘人民</div><div class="b" style="top:17px;font-size:4px">www.shenqiuxian.cn</div><div class="c" style="top:25px;font-size:5px">面对疫情 沈丘加油<br>面对未来 沈丘奋进</div></div><div class="tx">2019年社会工作师中级试题：社会工作法规</div></div>
<div class="th" style="top:1423px"><div class="poster" style="left:0;top:0;width:46px;height:40px"><div class="a" style="top:5px;font-size:10px">沈丘人民</div><div class="b" style="top:17px;font-size:4px">www.shenqiuxian.cn</div><div class="c" style="top:25px;font-size:5px">面对疫情 沈丘加油<br>面对未来 沈丘奋进</div></div><div class="tx">医保目录调整：药品调入调出程序公平公</div></div>
<div class="th" style="top:1469px"><div class="poster" style="left:0;top:0;width:46px;height:40px"><div class="a" style="top:5px;font-size:10px">沈丘人民</div><div class="b" style="top:17px;font-size:4px">www.shenqiuxian.cn</div><div class="c" style="top:25px;font-size:5px">面对疫情 沈丘加油<br>面对未来 沈丘奋进</div></div><div class="tx">徐广芹法官公正维权获赠旗致谢沈丘人民</div></div>

<div class="box" style="left:655px;top:1543px;width:185px;height:190px"></div>

<div class="box" style="left:655px;top:1747px;width:185px;height:415px"></div>
<div class="bt" style="left:667px;top:1766px">猜你喜欢</div>
<div class="gl" style="left:667px;top:1786px;width:160px"></div>
<div class="ul" style="left:667px;top:1785px;width:40px"></div>
<div class="gy" style="top:1794px;font-weight:700"><span>本宫的坚果品牌荣获《周口时间》举办的</span></div>
<div class="gy" style="top:1830px"><span>内蒙古乌兰察布：设施农业复工复产助农</span></div>
<div class="gy" style="top:1866px"><span>复星旅游文化(01992.HK)拟1100万英镑向Thom</span></div>
<div class="gy" style="top:1901px"><span>知识产权保护 聚焦四大方向（政策解读）</span></div>
<div class="gy" style="top:1937px"><span>疫后重振！海南重磅推出振兴旅游业“</span></div>
<div class="gy" style="top:1973px"><span>海南部分厅局负责人谈“振兴旅游业三十</span></div>
<div class="gy" style="top:2008px"><span>林铎在“六一”国际儿童节到来之际寄语</span></div>
<div class="gy" style="top:2044px"><span>黄坤明会见委内瑞拉统一社会主义党高级</span></div>
<div class="gy" style="top:2080px"><span>这一周天气继续晴朗沈丘人民新闻网</span></div>
<div class="gy" style="top:2116px"><span>5月1日降低社会保险费率是真的吗？为什</span></div>

<div class="box" style="left:655px;top:2176px;width:185px;height:191px"></div>

<div class="box" style="left:655px;top:2380px;width:185px;height:252px"></div>
<div class="bt" style="left:667px;top:2399px">站点信息</div>
<div class="gl" style="left:667px;top:2419px;width:160px"></div>
<div class="ul" style="left:667px;top:2418px;width:40px"></div>
<div class="abs" style="left:667px;top:2427px;font-size:9.5px;line-height:20px;color:#333;white-space:nowrap"><b>文章统计</b>：<span style="color:#1a9a5a">1885</span>篇文章<br><b>标签管理</b>：<span style="color:#1a9a5a">标签云</span><br><b>微信公众号</b>：扫描二维码，关注我们</div>
<svg class="abs" style="left:692px;top:2495px" width="110" height="110" viewBox="0 0 22 22" shape-rendering="crispEdges">
<rect width="22" height="22" fill="#fff"/>
<g fill="#111"><rect x="0" y="0" width="6" height="6"/><rect x="16" y="0" width="6" height="6"/><rect x="0" y="16" width="6" height="6"/></g>
<g fill="#fff"><rect x="1" y="1" width="4" height="4"/><rect x="17" y="1" width="4" height="4"/><rect x="1" y="17" width="4" height="4"/></g>
<g fill="#111"><rect x="2" y="2" width="2" height="2"/><rect x="18" y="2" width="2" height="2"/><rect x="2" y="18" width="2" height="2"/>
<rect x="7" y="0" width="2" height="1"/><rect x="10" y="1" width="3" height="1"/><rect x="8" y="2" width="1" height="3"/><rect x="11" y="3" width="2" height="2"/><rect x="14" y="1" width="1" height="4"/>
<rect x="0" y="7" width="3" height="1"/><rect x="4" y="8" width="3" height="2"/><rect x="1" y="10" width="2" height="3"/><rect x="5" y="12" width="2" height="1"/><rect x="0" y="14" width="4" height="1"/>
<rect x="7" y="7" width="2" height="2"/><rect x="10" y="6" width="1" height="3"/><rect x="12" y="7" width="3" height="1"/><rect x="16" y="7" width="2" height="2"/><rect x="19" y="8" width="3" height="1"/><rect x="20" y="10" width="1" height="3"/><rect x="17" y="11" width="2" height="2"/>
<rect x="7" y="14" width="3" height="1"/><rect x="8" y="16" width="2" height="3"/><rect x="11" y="17" width="3" height="1"/><rect x="12" y="19" width="2" height="3"/><rect x="15" y="15" width="2" height="2"/><rect x="18" y="16" width="3" height="1"/><rect x="16" y="19" width="1" height="3"/><rect x="19" y="19" width="3" height="2"/><rect x="7" y="20" width="3" height="2"/><rect x="14" y="12" width="2" height="2"/></g>
<circle cx="11" cy="11" r="2.2" fill="#3cb62c"/></svg>

<div class="box" style="left:655px;top:2645px;width:185px;height:166px"></div>
<div class="bt" style="left:667px;top:2665px">友情链接</div>
<div class="gl" style="left:667px;top:2685px;width:160px"></div>
<div class="ul" style="left:667px;top:2684px;width:40px"></div>
<div class="abs" style="left:682px;top:2702px;width:50px;text-align:center;font-size:9.5px;line-height:20px;color:#555">五色时光新<br>企业服务<br>爱家壁画<br>爱家壁纸<br>五色时光</div>
<div class="abs" style="left:761px;top:2702px;width:50px;text-align:center;font-size:9.5px;line-height:20px;color:#555">爱排行<br>头条新闻网<br>沈丘时间<br>周口时间</div>

<!-- back to top -->
<div class="abs" style="left:849px;top:3801px;width:27px;height:27px;background:#000;color:#fff;text-align:center;font-size:13px;line-height:28px">^</div>

<!-- footer -->
<div class="abs" style="left:0;top:4151px;width:889px;height:7px;background:#14b7d9"></div>
<div class="abs" style="left:0;top:4158px;width:889px;height:94px;background:#33383b"></div>
<svg class="abs" style="left:56px;top:4178px" width="66" height="66" viewBox="0 0 22 22" shape-rendering="crispEdges">
<rect width="22" height="22" fill="#fff"/>
<g fill="#111"><rect x="1" y="1" width="6" height="6"/><rect x="15" y="1" width="6" height="6"/><rect x="1" y="15" width="6" height="6"/></g>
<g fill="#fff"><rect x="2" y="2" width="4" height="4"/><rect x="16" y="2" width="4" height="4"/><rect x="2" y="16" width="4" height="4"/></g>
<g fill="#111"><rect x="3" y="3" width="2" height="2"/><rect x="17" y="3" width="2" height="2"/><rect x="3" y="17" width="2" height="2"/><rect x="8" y="2" width="2" height="3"/><rect x="11" y="1" width="2" height="2"/><rect x="9" y="8" width="4" height="2"/><rect x="2" y="9" width="3" height="2"/><rect x="14" y="9" width="2" height="4"/><rect x="18" y="10" width="2" height="2"/><rect x="8" y="14" width="2" height="3"/><rect x="12" y="16" width="3" height="2"/><rect x="16" y="17" width="4" height="2"/><rect x="10" y="19" width="2" height="2"/><rect x="5" y="12" width="3" height="1"/></g>
<circle cx="11" cy="11" r="2" fill="#3cb62c"/></svg>
<div class="abs" style="left:58px;top:4244px;font-size:8px;color:#888">微信公众号</div>
<div class="abs" style="left:141px;top:4178px;font-size:11px;font-weight:700;color:#18b4d8">站点声明：</div>
<div class="abs" style="left:141px;top:4198px;font-size:8.8px;line-height:17px;color:#888;white-space:nowrap">1、本网站模板，版权为五色时光公司所有，个人可以使用，但是未经许可不得用于任何商业目的。<br>2、所有文章未经授权禁止转载、摘编、复制或建立镜像，如有违反，追究法律责任。举报邮箱：a@tou-tiao.cc<br>Copyright©2016-2020《周口时间》新媒体运营中心版权所有 豫ICP备18006253号 XML地图 河南省五色时光科技有限公司提供技术支持</div>
<div class="abs" style="left:413px;top:4172px;font-size:25px;color:#fff;font-family:'Liberation Serif',serif;letter-spacing:1.8px;white-space:nowrap;opacity:.92">https://www.huzhan.com/ishop16302</div>
<svg class="abs" style="left:838px;top:4200px" width="51" height="52" viewBox="0 0 51 52"><path d="M51 0V52H0z" fill="#1c8fd0"/><path d="M46 8L6 50" stroke="#fff" stroke-width="1"/><text x="36" y="48" font-size="14" fill="#fff" font-family="Liberation Sans">b</text></svg>

</body></html>
